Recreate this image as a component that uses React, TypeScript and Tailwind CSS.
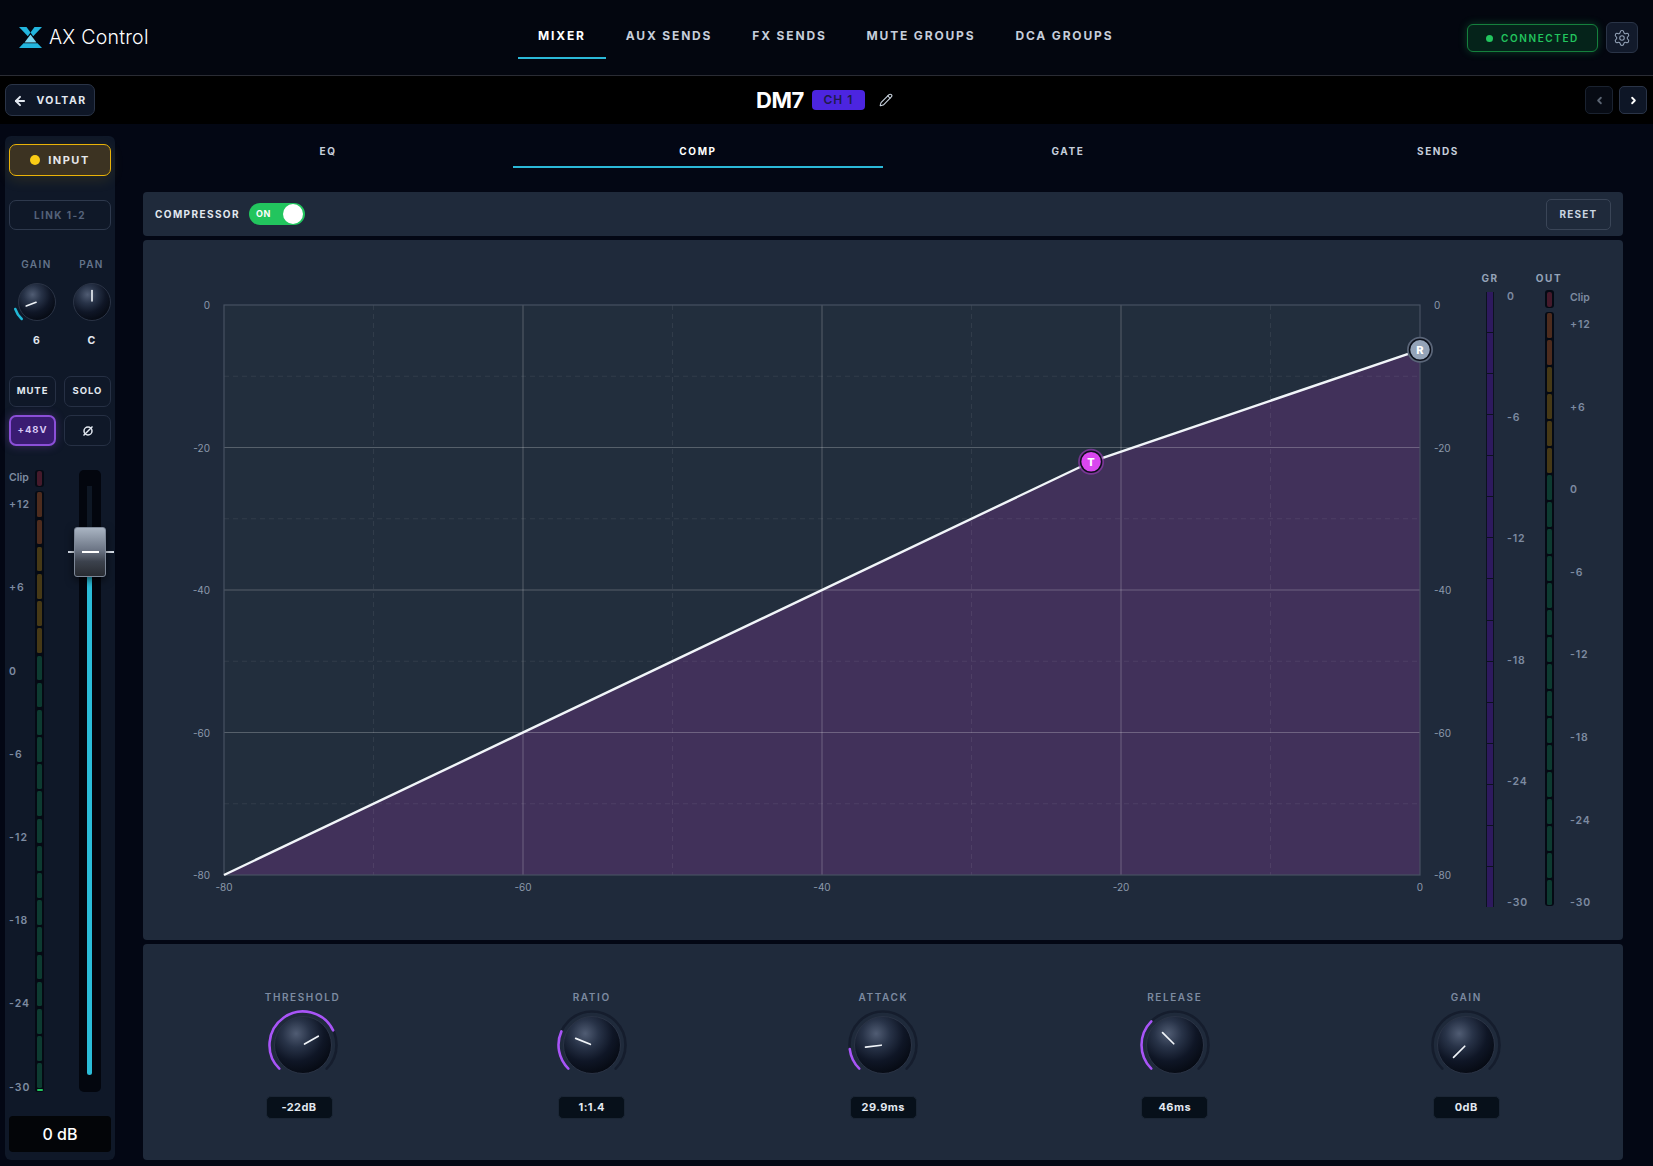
import { ArrowLeft, ChevronLeft, ChevronRight, Pencil, Settings } from 'lucide-react'

const NAV_ITEMS = ['MIXER', 'AUX SENDS', 'FX SENDS', 'MUTE GROUPS', 'DCA GROUPS']
const TABS = ['EQ', 'COMP', 'GATE', 'SENDS']
const METER_LABELS = ['+12', '+6', '0', '-6', '-12', '-18', '-24', '-30']
const GR_LABELS = ['0', '-6', '-12', '-18', '-24', '-30']
const SEGMENTS = Array.from({ length: 22 }, (_, i) =>
  i < 2 ? 'bg-[#4d2c1e]' : i < 6 ? 'bg-[#463916]' : 'bg-[#0d3b31]',
)

const COMP_KNOBS = [
  { id: 'threshold', label: 'THRESHOLD', value: '-22dB', angle: 60, arc: 64 },
  { id: 'ratio', label: 'RATIO', value: '1:1.4', angle: -68, arc: -66 },
  { id: 'attack', label: 'ATTACK', value: '29.9ms', angle: -97, arc: -97 },
  { id: 'release', label: 'RELEASE', value: '46ms', angle: -45, arc: -45 },
  { id: 'gain', label: 'GAIN', value: '0dB', angle: -135, arc: -135 },
]

function polar(cx: number, cy: number, r: number, deg: number) {
  const a = (deg * Math.PI) / 180
  return [cx + r * Math.sin(a), cy - r * Math.cos(a)]
}

function arcPath(cx: number, cy: number, r: number, from: number, to: number) {
  const [x1, y1] = polar(cx, cy, r, from)
  const [x2, y2] = polar(cx, cy, r, to)
  return `M ${x1} ${y1} A ${r} ${r} 0 ${to - from > 180 ? 1 : 0} 1 ${x2} ${y2}`
}

function Knob(props: {
  id: string
  size: number
  body: number
  arcR: number
  arcW: number
  angle: number
  arcFrom: number
  arcTo: number
  color: string
  track?: boolean
  pointer: [number, number]
  pointerW: number
}) {
  const { id, size, body, arcR, arcW, angle, arcFrom, arcTo, color, track, pointer, pointerW } = props
  const c = size / 2
  const [px1, py1] = polar(c, c, pointer[0], angle)
  const [px2, py2] = polar(c, c, pointer[1], angle)
  return (
    <svg width={size} height={size} viewBox={`0 0 ${size} ${size}`} className="block">
      <defs>
        <radialGradient id={id} cx="0.38" cy="0.3" r="0.75">
          <stop offset="0" stopColor="#505c73" />
          <stop offset="0.32" stopColor="#283348" />
          <stop offset="0.65" stopColor="#0f1626" />
          <stop offset="1" stopColor="#050911" />
        </radialGradient>
      </defs>
      {track && (
        <path d={arcPath(c, c, arcR, -135, 135)} fill="none" stroke="#151d2d" strokeWidth={arcW} strokeLinecap="round" />
      )}
      {arcTo > arcFrom && (
        <path d={arcPath(c, c, arcR, arcFrom, arcTo)} fill="none" stroke={color} strokeWidth={arcW} strokeLinecap="round" />
      )}
      <circle cx={c} cy={c} r={body} fill={`url(#${id})`} stroke="#2a3345" strokeWidth="1" />
      <line x1={px1} y1={py1} x2={px2} y2={py2} stroke="#f1f5f9" strokeWidth={pointerW} strokeLinecap="round" />
    </svg>
  )
}

function SegmentMeter({ lit, compact }: { lit?: boolean; compact?: boolean }) {
  return (
    <div className="flex w-[9px] flex-col items-center gap-[4px]">
      <div className="flex h-[18px] w-[9px] items-center justify-center rounded-[3px] bg-[#050a14]">
        <div className="h-[15px] w-[5px] rounded-[2px] bg-[#451a2b]" />
      </div>
      <div className="flex w-[9px] flex-col items-center gap-[2.5px] rounded-[3px] bg-[#050a14] py-[1px]">
        {SEGMENTS.map((color, i) => (
          <div
            key={i}
            className={`w-[5px] rounded-[1.5px] ${compact ? 'h-[24.5px]' : 'h-[24.7px]'} ${color}`}
          />
        ))}
        {lit && <div className="-mt-[1.5px] h-[2px] w-[6px] rounded-full bg-[#22c55e]" />}
      </div>
    </div>
  )
}

function Header() {
  return (
    <header className="flex h-[76px] shrink-0 items-start border-b border-[#2a2c34] bg-[#03060f]">
      <div className="flex w-[518px] items-center pl-[19px] pt-[27px]">
        <svg width="23" height="21" viewBox="0 0 23 21">
          <polygon points="0,0 7.5,0 11.5,5.5 8.8,9.2" fill="#22b5de" />
          <polygon points="23,0 15.5,0 11.5,5.5 14.2,9.2" fill="#22b5de" />
          <polygon points="11.5,7.5 17.5,15.5 5.5,15.5" fill="#7ad6f0" />
          <polygon points="4.5,16.2 18.5,16.2 23,21 0,21" fill="#22b5de" />
        </svg>
        <span className="ml-[7px] text-[19.5px] leading-[21px] font-light tracking-[0.012em] text-white">AX Control</span>
      </div>
      <nav className="flex">
        {NAV_ITEMS.map((item, i) => (
          <div
            key={item}
            className={`h-[59px] border-b-2 px-5 pt-[28px] text-xs font-bold tracking-[0.153em] whitespace-nowrap ${
              i === 0 ? 'border-[#2bb8d8] text-white' : 'border-transparent text-[#c6cedb]'
            }`}
          >
            {item}
          </div>
        ))}
      </nav>
      <div className="ml-auto flex items-center gap-[8px] pr-[15px] pt-[22px]">
        <div className="flex h-[28px] w-[131px] items-center gap-[8px] rounded-[6px] border border-[#15803d] bg-[#05231a] pl-[18px] pt-[1px] shadow-[0_0_8px_rgba(34,197,94,0.3)]">
          <span className="h-[7px] w-[7px] rounded-full bg-[#22c55e]" />
          <span className="text-[10px] font-semibold tracking-[0.16em] text-[#22c55e]">CONNECTED</span>
        </div>
        <div className="flex h-[31px] w-[32px] items-center justify-center rounded-[6px] border border-[#2a3447] bg-[#121a2b]">
          <Settings size={18} strokeWidth={1.4} className="text-[#94a3b8]" />
        </div>
      </div>
    </header>
  )
}

function TitleBar() {
  return (
    <div className="grid h-[48px] shrink-0 grid-cols-[1fr_auto_1fr] items-center bg-black px-[5px]">
      <div>
        <button className="flex h-[32px] w-[90px] items-center justify-center gap-[9px] rounded-[7px] border border-[#2a3447] bg-[#0e1626] pt-[1px] text-[10.5px] font-bold tracking-[0.14em] text-[#e2e8f0]">
          <ArrowLeft size={14} strokeWidth={3.4} />
          VOLTAR
        </button>
      </div>
      <div className="flex items-center pr-[4px]">
        <span className="text-[22px] leading-[30px] font-bold tracking-[-0.02em] text-white">DM7</span>
        <span className="ml-[8px] flex h-[20px] w-[53px] items-center justify-center rounded-[4px] bg-[#4c25e0] text-[12px] font-semibold tracking-[0.08em] text-[#1e1b4b]">
          CH 1
        </span>
        <Pencil size={14} strokeWidth={1.8} className="ml-[14px] text-[#cbd5e1]" />
      </div>
      <div className="flex justify-end gap-[6px] pr-[1px]">
        <div className="flex h-[28px] w-[28px] items-center justify-center rounded-[5px] border border-[#1a2230] bg-[#070b14] text-[#5b6472]">
          <ChevronLeft size={11} strokeWidth={4} />
        </div>
        <div className="flex h-[28px] w-[28px] items-center justify-center rounded-[5px] border border-[#2a3447] bg-[#0e1626] text-white">
          <ChevronRight size={11} strokeWidth={4} />
        </div>
      </div>
    </div>
  )
}

function Sidebar() {
  return (
    <aside className="ml-[5px] mt-[12px] h-[1024px] w-[110px] shrink-0 rounded-[6px] bg-[#0f1828] px-[4px] pt-[8px]">
      <div className="flex h-[32px] items-center justify-center gap-[8px] rounded-[7px] border border-[#eab308] bg-[#3c3322] shadow-[0_4px_14px_rgba(234,179,8,0.12)]">
        <span className="h-[10px] w-[10px] rounded-full bg-[#facc15]" />
        <span className="text-[11px] font-bold tracking-[0.14em] text-[#e5e7eb]">INPUT</span>
      </div>
      <div className="mt-[24px] flex h-[30px] items-center justify-center rounded-[7px] border border-[#2e394d] text-[10px] font-bold tracking-[0.14em] text-[#55627a]">
        LINK 1-2
      </div>
      <div className="mt-[27px] flex">
        <div className="flex w-[55px] shrink-0 flex-col items-center">
          <span className="text-[10px] leading-[14px] font-semibold tracking-[0.14em] text-[#64748b]">GAIN</span>
          <div className="mt-[5px]">
            <Knob id="k-gain-in" size={52} body={18.5} arcR={22.8} arcW={2.6} angle={-110} arcFrom={-138} arcTo={-108} color="#22b8d6" pointer={[1, 11.5]} pointerW={1.6} />
          </div>
          <span className="mt-[6px] text-[10.5px] leading-[14px] font-bold text-[#e2e8f0]">6</span>
        </div>
        <div className="flex w-[55px] shrink-0 flex-col items-center">
          <span className="text-[10px] leading-[14px] font-semibold tracking-[0.14em] text-[#64748b]">PAN</span>
          <div className="mt-[5px]">
            <Knob id="k-pan" size={52} body={18.5} arcR={22.8} arcW={2.6} angle={0} arcFrom={0} arcTo={0} color="#22b8d6" pointer={[1, 11.5]} pointerW={1.6} />
          </div>
          <span className="mt-[6px] text-[10.5px] leading-[14px] font-bold text-[#e2e8f0]">C</span>
        </div>
      </div>
      <div className="mt-[28px] grid grid-cols-[47px_47px] justify-between gap-y-[8px]">
        <div className="flex h-[31px] items-center justify-center rounded-[7px] border border-[#263044] text-[9.5px] font-bold tracking-[0.1em] text-[#e2e8f0]">MUTE</div>
        <div className="flex h-[31px] items-center justify-center rounded-[7px] border border-[#263044] text-[9.5px] font-bold tracking-[0.1em] text-[#e2e8f0]">SOLO</div>
        <div className="flex h-[31px] items-center justify-center rounded-[7px] border-2 border-[#8b4fd8] bg-[#3a1c72] text-[9.5px] font-bold tracking-[0.1em] text-[#d8c9f5] shadow-[0_0_10px_rgba(139,79,216,0.35)]">+48V</div>
        <div className="flex h-[31px] items-center justify-center rounded-[7px] border border-[#263044]">
          <svg width="12" height="12" viewBox="0 0 12 12" fill="none" stroke="#e2e8f0" strokeWidth="1.5">
            <circle cx="6" cy="6" r="4" />
            <line x1="1.5" y1="10.5" x2="10.5" y2="1.5" />
          </svg>
        </div>
      </div>
      <div className="mt-[24px] flex h-[622px]">
        <div className="flex w-[26px] flex-col gap-[69.2px] pt-[1px] text-[10.5px] leading-[14px] font-semibold text-[#7d8ba1]">
          <span className="-mb-[56px]">Clip</span>
          {METER_LABELS.map((label) => (
            <span key={label} className="tracking-[0.1em]">{label}</span>
          ))}
        </div>
        <SegmentMeter lit />
        <div className="relative ml-[35px] h-[622px] w-[22px] rounded-[5px] bg-[#03060e]">
          <div className="absolute left-[8px] top-[16px] h-[66px] w-[5px] bg-[#0e1724]" />
          <div className="absolute left-[8px] top-[100px] h-[505px] w-[5px] rounded-b-[3px] bg-[#2bbcd8]" />
          <div className="absolute -left-[11px] top-[81px] h-[2px] w-[46px] bg-[#d7dee8]" />
          <div className="absolute -left-[5px] top-[57px] flex h-[50px] w-[32px] items-center justify-center rounded-[3px] border border-[#7d8797] bg-[linear-gradient(180deg,#a9b4c2_0%,#6d7686_45%,#3c424d_70%,#282b31_100%)] shadow-[0_3px_8px_rgba(0,0,0,0.6)]">
            <div className="h-[2px] w-[17px] bg-white" />
          </div>
        </div>
      </div>
      <div className="mt-[24px] flex h-[36px] items-center justify-center rounded-[4px] bg-[#030508] text-[16px] font-medium text-white">
        0 dB
      </div>
    </aside>
  )
}

const X0 = 224
const Y0 = 305
const W = 1196
const H = 570
const sx = (v: number) => X0 + ((v + 80) / 80) * W
const sy = (v: number) => Y0 + (-v / 80) * H

function TransferGraph() {
  const tx = sx(-22)
  const ty = sy(-22)
  const rx = sx(0)
  const ry = sy(-6.29)
  return (
    <svg width="1327" height="700" viewBox="143 240 1327 700" className="block shrink-0">
      <rect x={X0} y={Y0} width={W} height={H} fill="#222e3d" />
      <polygon points={`${X0},${Y0 + H} ${tx},${ty} ${rx},${ry} ${rx},${Y0 + H}`} fill="#41315a" />
      {[-70, -50, -30, -10].map((v) => (
        <g key={v} stroke="#ffffff" strokeOpacity="0.07" strokeDasharray="5 4">
          <line x1={sx(v)} y1={Y0} x2={sx(v)} y2={Y0 + H} />
          <line x1={X0} y1={sy(v)} x2={X0 + W} y2={sy(v)} />
        </g>
      ))}
      {[-60, -40, -20].map((v) => (
        <g key={v} stroke="#ffffff" strokeOpacity="0.24">
          <line x1={sx(v)} y1={Y0} x2={sx(v)} y2={Y0 + H} />
          <line x1={X0} y1={sy(v)} x2={X0 + W} y2={sy(v)} />
        </g>
      ))}
      <rect x={X0} y={Y0} width={W} height={H} fill="none" stroke="#465162" strokeWidth="1.2" />
      {[0, -20, -40, -60, -80].map((v) => (
        <g key={v} fill="#8c99ab" fontSize="10" fontFamily="Inter, sans-serif">
          <text x={210} y={sy(v) + 4} textAnchor="end">{v}</text>
          <text x={1434} y={sy(v) + 4}>{v}</text>
          <text x={sx(v)} y={890.5} textAnchor="middle">{v}</text>
        </g>
      ))}
      <polyline points={`${X0},${Y0 + H} ${tx},${ty} ${rx},${ry}`} fill="none" stroke="#f1f5f9" strokeWidth="2.4" />
      <circle cx={tx} cy={ty} r="13" fill="#8b3aa8" fillOpacity="0.75" />
      <circle cx={tx} cy={ty} r="10.5" fill="#d946ef" stroke="#0b0f1a" strokeWidth="1.5" />
      <text x={tx} y={ty + 4} textAnchor="middle" fill="#fff" fontSize="11" fontWeight="800" fontFamily="Inter, sans-serif">T</text>
      <circle cx={rx} cy={ry} r="13" fill="#5a6578" />
      <circle cx={rx} cy={ry} r="10.5" fill="#94a3b8" stroke="#0b0f1a" strokeWidth="1.5" />
      <text x={rx} y={ry + 4} textAnchor="middle" fill="#fff" fontSize="11" fontWeight="800" fontFamily="Inter, sans-serif">R</text>
    </svg>
  )
}

function GraphPanel() {
  return (
    <div className="flex h-[700px] rounded-[4px] bg-[#1f2a3b]">
      <TransferGraph />
      <div className="w-[59px] pt-[31px]">
        <div className="w-[40px] text-center text-[10px] leading-[14px] font-bold tracking-[0.14em] text-[#94a3b8]">GR</div>
        <div className="mt-[7px] flex pl-[16px]">
          <div className="flex h-[615px] w-[8px] flex-col gap-[1px] border-x border-[#0c1220] bg-[#0c1220]">
            {Array.from({ length: 15 }).map((_, i) => (
              <div key={i} className="flex-1 bg-[#2e1a5e]" />
            ))}
          </div>
          <div className="-mt-[2px] ml-[13px] flex flex-col gap-[107.2px] text-[10.5px] leading-[14px] font-semibold tracking-[0.08em] text-[#7d8ba1]">
            {GR_LABELS.map((label) => (
              <span key={label}>{label}</span>
            ))}
          </div>
        </div>
      </div>
      <div className="pt-[31px]">
        <div className="w-[40px] text-center text-[10px] leading-[14px] font-bold tracking-[0.16em] text-[#94a3b8]">OUT</div>
        <div className="mt-[5px] flex pl-[16px]">
          <SegmentMeter compact />
          <div className="ml-[16px] flex flex-col gap-[68.6px] pt-[1px] text-[10.5px] leading-[14px] font-semibold text-[#7d8ba1]">
            <span className="-mb-[55.6px]">Clip</span>
            {METER_LABELS.map((label) => (
              <span key={label} className="tracking-[0.08em]">{label}</span>
            ))}
          </div>
        </div>
      </div>
    </div>
  )
}

function KnobPanel() {
  return (
    <div className="mt-[4px] grid h-[216px] grid-cols-[287px_repeat(4,291.5px)] rounded-[4px] bg-[#1f2a3b] pl-[16px] pt-[46px]">
      {COMP_KNOBS.map((k) => (
        <div key={k.id} className="flex flex-col items-center">
          <span className="text-[10px] leading-[14px] font-semibold tracking-[0.16em] text-[#7d8ba1]">{k.label}</span>
          <div className="mt-[6px]">
            <Knob id={`k-${k.id}`} size={70} body={28.5} arcR={33.5} arcW={2.6} angle={k.angle} arcFrom={-135} arcTo={k.arc} color="#a855f7" track pointer={[1.8, 17.6]} pointerW={1.7} />
          </div>
          <div
            className={`mt-[16px] flex h-[23px] w-[67px] items-center justify-center rounded-[5px] border border-[#1b2635] bg-[#07101a] text-[11px] font-bold tracking-[0.04em] text-[#e2e8f0] ${
              k.id === 'threshold' ? 'mr-[7px]' : ''
            }`}
          >
            {k.value}
          </div>
        </div>
      ))}
    </div>
  )
}

export default function App() {
  return (
    <div className="flex h-[1166px] w-full flex-col overflow-hidden bg-[#030714] [font-family:Inter,sans-serif]">
      <Header />
      <TitleBar />
      <div className="flex flex-1">
        <Sidebar />
        <main className="ml-[28px] w-[1480px] shrink-0">
          <div className="grid grid-cols-4">
            {TABS.map((tab) => (
              <div
                key={tab}
                className={`h-[44px] border-b-2 pt-[20px] text-center text-[10px] leading-[14px] font-bold tracking-[0.16em] ${
                  tab === 'COMP' ? 'border-[#2bb8d8] text-white' : 'border-transparent text-[#c6cedb]'
                }`}
              >
                {tab}
              </div>
            ))}
          </div>
          <div className="mt-[24px] flex h-[44px] items-center rounded-[4px] bg-[#1f2a3b] pl-[12px] pr-[12px]">
            <span className="text-[10px] font-bold tracking-[0.14em] text-[#e2e8f0]">COMPRESSOR</span>
            <div className="ml-[9px] flex h-[22px] w-[56px] items-center justify-between rounded-full bg-[#22c55e] pl-[7px] pr-[2px]">
              <span className="text-[9px] font-bold tracking-[0.08em] text-white">ON</span>
              <span className="h-[20px] w-[20px] rounded-full bg-white" />
            </div>
            <button className="ml-auto flex h-[31px] w-[65px] items-center justify-center rounded-[5px] border border-[#3a4557] text-[10px] font-bold tracking-[0.12em] text-[#cbd5e1]">
              RESET
            </button>
          </div>
          <div className="mt-[4px]">
            <GraphPanel />
          </div>
          <KnobPanel />
        </main>
      </div>
    </div>
  )
}
